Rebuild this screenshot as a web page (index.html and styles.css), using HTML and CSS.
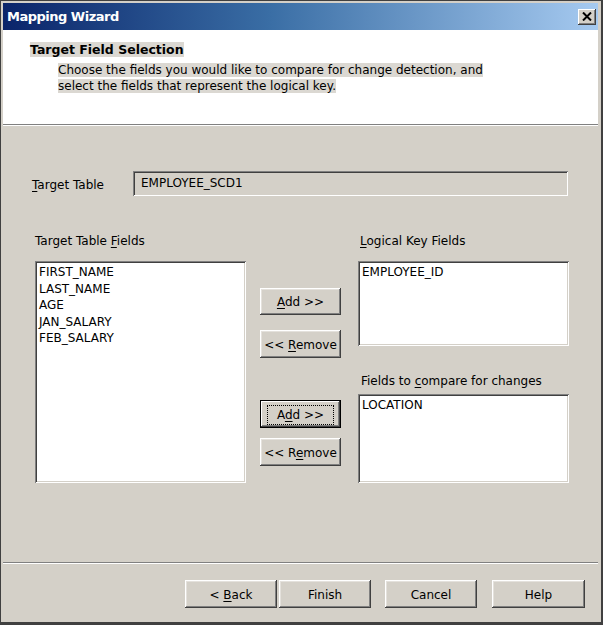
FILE: index.html
```html
<!DOCTYPE html>
<html>
<head>
<meta charset="utf-8">
<link rel="stylesheet" href="styles.css">
</head>
<body>
<div class="window">
  <div class="titlebar">
    <span class="title">Mapping Wizard</span>
    <span class="close"><svg width="10" height="9" viewBox="0 0 10 9"><path d="M1 0.5 L9 8.5 M9 0.5 L1 8.5" stroke="#000" stroke-width="2" fill="none"/></svg></span>
  </div>
  <div class="header">
    <div class="h-title"><span class="hl">Target Field Selection</span></div>
    <div class="h-desc"><span class="hl">Choose the fields you would like to compare for change detection, and</span><br><span class="hl">select the fields that represent the logical key.</span></div>
  </div>
  <div class="sep"></div>
  <div class="content">
    <div class="table-row">
      <span class="tlabel"><u>T</u>arget Table</span>
      <div class="textbox">EMPLOYEE_SCD1</div>
    </div>
    <div class="main">
      <div class="col-left">
        <div class="lbl">Target Table <u>F</u>ields</div>
        <div class="listbox big">
          <div>FIRST_NAME</div>
          <div>LAST_NAME</div>
          <div>AGE</div>
          <div>JAN_SALARY</div>
          <div>FEB_SALARY</div>
        </div>
      </div>
      <div class="col-mid">
        <div class="btn b1"><span><u>A</u>dd &gt;&gt;</span></div>
        <div class="btn b2"><span>&lt;&lt; <u>R</u>emove</span></div>
        <div class="btn b3 default"><span class="focus">A<u>d</u>d &gt;&gt;</span></div>
        <div class="btn b4"><span>&lt;&lt; R<u>e</u>move</span></div>
      </div>
      <div class="col-right">
        <div class="lbl"><u>L</u>ogical Key Fields</div>
        <div class="listbox key">
          <div>EMPLOYEE_ID</div>
        </div>
        <div class="lbl lbl2">Fields to <u>c</u>ompare for changes</div>
        <div class="listbox cmp">
          <div>LOCATION</div>
        </div>
      </div>
    </div>
  </div>
  <div class="sep"></div>
  <div class="footer">
    <div class="btn fb"><span>&lt; <u>B</u>ack</span></div>
    <div class="btn fb finish"><span>Finish</span></div>
    <div class="btn fb cancel"><span>Cancel</span></div>
    <div class="btn fb help"><span>Help</span></div>
  </div>
</div>
</body>
</html>
```

FILE: styles.css
```css
* { box-sizing: border-box; }
html, body { margin: 0; padding: 0; }
body {
  width: 603px;
  height: 625px;
  overflow: hidden;
  font-family: "DejaVu Sans", Verdana, sans-serif;
  font-size: 12px;
  color: #000;
  background: #404040;
}
u { text-decoration: underline; text-underline-offset: 2px; }
.window {
  width: 603px;
  height: 625px;
  background: #d4d0c8;
  border-style: solid;
  border-width: 1px 2px 3px 1px;
  border-color: #404040;
  padding: 2px 3px 0 2px;
  display: flex;
  flex-direction: column;
}
.titlebar {
  height: 27px;
  background: linear-gradient(to right, #0a246a 0%, #3a6ea5 45%, #a6caf0 100%);
  display: flex;
  align-items: center;
  justify-content: space-between;
  padding: 0 2px 0 4px;
}
.title {
  color: #fff;
  font-weight: bold;
  font-size: 13px;
  letter-spacing: -0.5px;
}
.close {
  width: 18px;
  height: 16px;
  background: #d4d0c8;
  box-shadow: inset -1px -1px #404040, inset 1px 1px #fff, inset -2px -2px #808080;
  display: flex;
  align-items: center;
  justify-content: center;
}
.header {
  height: 94px;
  background: #fff;
  padding: 12px 0 0 27px;
  line-height: 16px;
}
.hl { background: #dbd8d2; }
.h-title { font-weight: bold; font-size: 12.5px; margin-bottom: 4px; }
.h-desc { padding-left: 28px; }
.sep {
  height: 2px;
  border-top: 1px solid #808080;
  border-bottom: 1px solid #fff;
}
.content {
  height: 436px;
  padding: 45px 0 0 29px;
}
.table-row {
  display: flex;
  align-items: center;
  height: 25px;
}
.tlabel { width: 101px; padding-top: 2px; }
.textbox {
  width: 435px;
  height: 25px;
  padding: 5px 0 0 8px;
  box-shadow: inset 1px 1px #808080, inset -1px -1px #fff, inset 2px 2px #404040, inset -2px -2px #d4d0c8;
}
.main {
  display: flex;
  margin-top: 38px;
  padding-left: 3px;
}
.lbl { height: 27px; line-height: 15px; }
.listbox {
  width: 211px;
  background: #fff;
  padding: 3px 0 0 4px;
  line-height: 16.5px;
  box-shadow: inset 1px 1px #808080, inset -1px -1px #fff, inset 2px 2px #404040, inset -2px -2px #d4d0c8;
}
.big { height: 222px; }
.key { height: 85px; }
.cmp { height: 89px; }
.lbl2 { height: 48px; padding-top: 28px; padding-left: 3px; }
.col-left { width: 211px; }
.col-mid {
  width: 81px;
  margin-left: 14px;
  padding-top: 54px;
  display: flex;
  flex-direction: column;
}
.col-right { width: 211px; margin-left: 17px; }
.col-right .lbl:first-child { padding-left: 2px; }
.btn {
  height: 28px;
  background: #d4d0c8;
  display: flex;
  align-items: center;
  justify-content: center;
  white-space: nowrap;
  padding-top: 1px;
  box-shadow: inset -1px -1px #404040, inset 1px 1px #fff, inset -2px -2px #808080, inset 2px 2px #e4e1dc;
}
.b1 { height: 27px; }
.b2 { margin-top: 15px; }
.b3 { margin-top: 42px; }
.b4 { margin-top: 10px; }
.default {
  box-shadow: inset 0 0 0 1px #000, inset -2px -2px #404040, inset 2px 2px #fff, inset -3px -3px #808080;
}
.focus {
  outline: 1px dotted #000;
  outline-offset: 0;
  padding: 2px 9px;
}
.footer {
  flex: 1;
  display: flex;
  padding: 16px 0 0 182px;
}
.fb { width: 92px; height: 28px; }
.finish { margin-left: 2px; }
.cancel { margin-left: 14px; }
.help { margin-left: 15px; width: 93px; }
```
